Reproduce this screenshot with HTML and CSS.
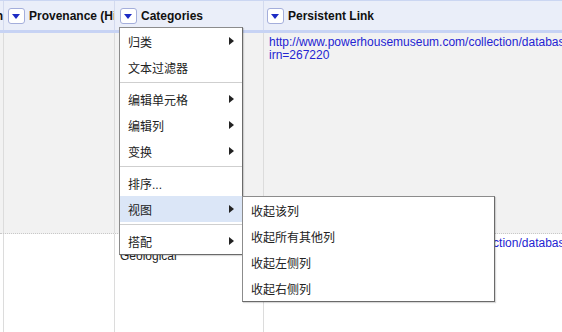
FILE: index.html
```html
<!DOCTYPE html>
<html lang="zh">
    <head>
        <meta name="viewport" content="width=device-width, initial-scale=1">
        <link rel="stylesheet" href="styles.css">
    </head>
    <body>
        <!--The data table: a header row and two record rows-->
        <div class="grid">
            <div class="head">
                <div class="cell c0"><span class="title">Description</span></div>
                <div class="cell c1"><span class="drop"></span><span class="title">Provenance (Historical notes)</span></div>
                <div class="cell c2"><span class="drop"></span><span class="title">Categories</span></div>
                <div class="cell c3"><span class="drop"></span><span class="title">Persistent Link</span></div>
            </div>

            <div class="row odd">
                <div class="cell c0"></div>
                <div class="cell c1"></div>
                <div class="cell c2"><span class="plain">Specimens</span></div>
                <div class="cell c3"><a class="link">http://www.powerhousemuseum.com/collection/database/?<br>irn=267220</a></div>
            </div>

            <div class="row even">
                <div class="cell c0"></div>
                <div class="cell c1"></div>
                <div class="cell c2"><span class="plain">Specimens<br>Geological</span></div>
                <div class="cell c3"><a class="link">http://www.powerhousemuseum.com/collection/database/?<br>irn=267221</a></div>
            </div>
        </div>

        <!--Column menu for Categories, with the 视图 submenu open-->
        <div class="menu main">
            <div class="item">归类<span class="arrow"></span></div>
            <div class="item">文本过滤器</div>
            <div class="sep"></div>
            <div class="item">编辑单元格<span class="arrow"></span></div>
            <div class="item">编辑列<span class="arrow"></span></div>
            <div class="item">变换<span class="arrow"></span></div>
            <div class="sep"></div>
            <div class="item">排序...</div>
            <div class="item active">视图<span class="arrow"></span></div>
            <div class="sep"></div>
            <div class="item">搭配<span class="arrow"></span></div>
        </div>

        <div class="menu sub">
            <div class="item">收起该列</div>
            <div class="item">收起所有其他列</div>
            <div class="item">收起左侧列</div>
            <div class="item">收起右侧列</div>
        </div>
    </body>
</html>
```

FILE: styles.css
```css
html {box-sizing: border-box;}
*, *:before, *:after {
    box-sizing: inherit;
}

body {
    margin: 0;
    overflow: hidden;
    font-family: "Liberation Sans", "Noto Sans CJK SC", sans-serif;
    color: #222;
}

/*Table*/
.grid {
    display: flex;
    flex-direction: column;
    height: 100vh;
}

.head, .row {
    display: flex;
    flex-direction: row;
}

.cell {
    flex: none;
    overflow: hidden;
    white-space: nowrap;
    border-right: 1px solid #dcdcdc;
}

.c0 { width: 4px; }
.c1 { width: 111px; }
.c2 { width: 149px; }
.c3 { flex: 1; border-right: none; }

.head {
    height: 33px;
    background-color: #eaeef9;
    border-top: 1px solid #cbd6f2;
    border-bottom: 3px solid #c7d3f4;
}

.head .cell {
    display: flex;
    align-items: center;
    gap: 4px;
    padding-left: 4px;
    border-right-color: #d3daee;
}

.head .c0 {
    padding-left: 0;
    justify-content: flex-end;
}

.head .c2 {
    padding-left: 5px;
}

.head .c3 {
    padding-left: 3px;
}

.title {
    font-size: 12px;
    font-weight: bold;
    color: #111;
}

.drop {
    flex: none;
    position: relative;
    width: 17px;
    height: 16px;
    background-color: white;
    border: 1px solid #a4aedb;
    border-radius: 3px;
}

.drop:after {
    content: "";
    position: absolute;
    left: 3px;
    top: 5px;
    border-top: 5px solid #1c2bc4;
    border-left: 4.5px solid transparent;
    border-right: 4.5px solid transparent;
}

.row .cell {
    padding: 3px 5px;
    font-size: 12px;
    line-height: 13px;
}

.row .c0 {
    padding: 0;
}

.odd {
    height: 201px;
    background-color: #f2f2f2;
    border-bottom: 1px dotted #c8c8c8;
}

.even {
    flex: 1;
    background-color: white;
}

.link {
    color: #2424d2;
}

/*Menus*/
.menu {
    position: absolute;
    background-color: white;
    border: 1px solid #8c8c8c;
    border-right-color: #6a6a6a;
    border-bottom-color: #6a6a6a;
    box-shadow: 1px 1px 1px rgba(0,0,0,0.15);
    font-size: 12px;
    color: #222;
}

.main {
    left: 119px;
    top: 27px;
    width: 124px;
}

.sub {
    left: 242px;
    top: 196px;
    width: 253px;
}

.item {
    display: flex;
    align-items: center;
    justify-content: space-between;
    height: 26px;
    padding: 0 8px;
    white-space: nowrap;
}

.item.active {
    background-color: #dbe6f7;
}

.arrow {
    width: 0;
    height: 0;
    border-left: 5px solid #222;
    border-top: 4.5px solid transparent;
    border-bottom: 4.5px solid transparent;
}

.sep {
    height: 1px;
    margin: 2px 0 3px 0;
    background-color: #cfcfcf;
}
```
